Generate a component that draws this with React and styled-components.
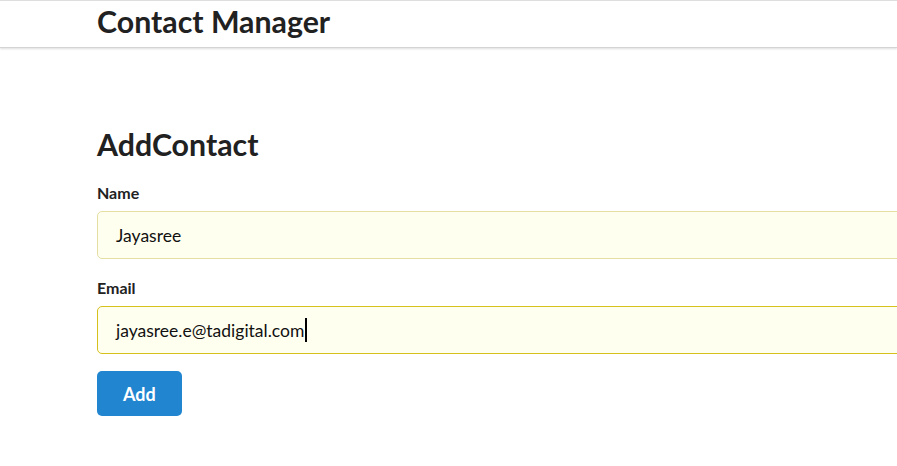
import React from "react";
import styled, { createGlobalStyle } from "styled-components";

const Global = createGlobalStyle`
  html, body { margin: 0; padding: 0; background: #fff; overflow: hidden; }
  body { font-family: Lato, "Noto Sans", sans-serif; color: rgba(0,0,0,0.87); }
`;

const Header = styled.header`
  border-top: 1px solid #dededf;
  border-bottom: 1px solid #d4d4d5;
  box-shadow: 0 1px 2px rgba(34, 36, 38, 0.15);
  height: 46px;
  padding-left: 97px;
  display: flex;
  align-items: flex-start;
`;

const Title = styled.h1`
  margin: 0;
  font-size: 30.3px;
  line-height: 40px;
  font-weight: 700;
  color: #212121;
`;

const Main = styled.main`
  padding: 77px 0 0 97px;
  width: 900px;
`;

const Heading = styled.h2`
  margin: 0 0 20px;
  font-size: 30.3px;
  line-height: 38px;
  font-weight: 700;
  color: #212121;
`;

const Form = styled.form`
  display: flex;
  flex-direction: column;
`;

const Field = styled.div`
  display: flex;
  flex-direction: column;
  margin-bottom: ${(p) => (p.$last ? "17px" : "19px")};
`;

const Label = styled.label`
  font-size: 16px;
  line-height: 20px;
  font-weight: 700;
  color: #222;
  margin-bottom: 8px;
`;

const InputBox = styled.div`
  box-sizing: border-box;
  height: 48px;
  width: 100%;
  padding: 0 18px;
  display: flex;
  align-items: center;
  background: #fffff0;
  border: 1px solid ${(p) => (p.$focused ? "#d6c01c" : "#e5dfa3")};
  border-radius: 5px;
  font-size: 17.5px;
  color: #111;
`;

const Caret = styled.span`
  display: inline-block;
  width: 2px;
  height: 24px;
  background: #000;
  margin-left: 1px;
`;

const Button = styled.button`
  align-self: flex-start;
  box-sizing: border-box;
  height: 45px;
  padding: 0 26px;
  background: #2185d0;
  color: #fff;
  border: none;
  border-radius: 5px;
  font-family: Lato, "Noto Sans", sans-serif;
  font-size: 18px;
  font-weight: 700;
  cursor: pointer;
`;

export default function App() {
  return (
    <>
      <Global />
      <Header>
        <Title>Contact Manager</Title>
      </Header>
      <Main>
        <Heading>AddContact</Heading>
        <Form onSubmit={(e) => e.preventDefault()}>
          <Field>
            <Label>Name</Label>
            <InputBox>Jayasree</InputBox>
          </Field>
          <Field $last>
            <Label>Email</Label>
            <InputBox $focused>
              jayasree.e@tadigital.com
              <Caret />
            </InputBox>
          </Field>
          <Button type="submit">Add</Button>
        </Form>
      </Main>
    </>
  );
}
